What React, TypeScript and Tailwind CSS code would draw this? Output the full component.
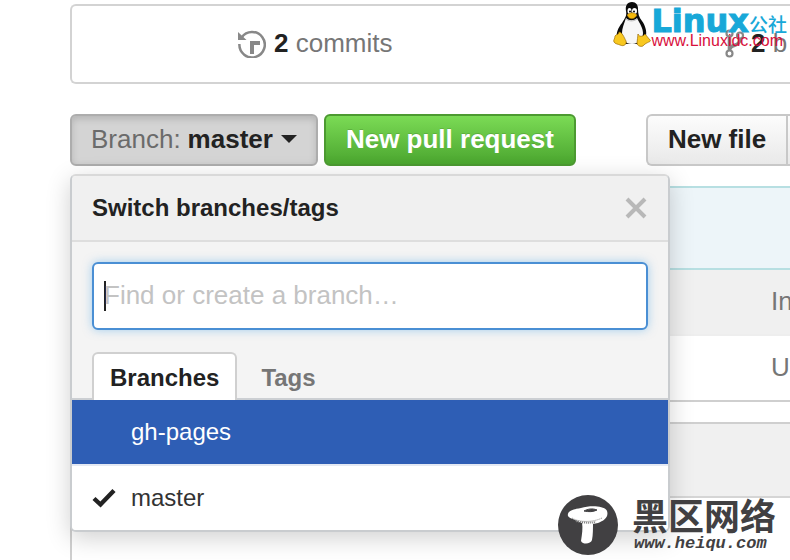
import React from "react";

function HistoryIcon() {
  return (
    <svg width="28" height="28" viewBox="0 0 28 28" aria-hidden="true" className="shrink-0">
      <path d="M3.600 7.500A12.700 12.700 0 1 1 1.400 14" fill="none" stroke="#888" strokeWidth="2.500" />
      <path d="M0 2l8.500 8H0z" fill="#888" />
      <path d="M12 24V11h10v4h-6v9z" fill="#888" />
    </svg>
  );
}

function BranchIcon() {
  return (
    <svg width="20" height="30" viewBox="0 0 20 30" aria-hidden="true" className="shrink-0">
      <g fill="none" stroke="#888" strokeWidth="2.200">
        <circle cx="4.500" cy="4.500" r="3" />
        <circle cx="15" cy="6.500" r="3" />
        <circle cx="4.500" cy="24.500" r="3" />
      </g>
      <path d="M4.500 7.500v14M15 9.500c0 5-3 6-6 7s-4.500 2-4.500 5" fill="none" stroke="#888" strokeWidth="3.600" />
    </svg>
  );
}

function Penguin() {
  return (
    <svg width="38" height="46" viewBox="0 0 38 46" aria-hidden="true" className="shrink-0">
      <path d="M19 1C14 1 12 5 13 10c1 5-1 7-4 12-4 5-6 10-5 14l7 7h16l6-8c1-5-1-11-4-15s-4-7-4-12C25 4 23 1 19 1z" fill="#0b0b0b" />
      <path d="M13 17c3 3 8 3 11 0 3 6 6 10 6 15s-4 11-11 11-10-5-10-11c0-5 2-9 4-15z" fill="#f7f7f7" />
      <path d="M13 18c2 2 7 3 11 0" fill="none" stroke="#bbb" />
      <ellipse cx="16.500" cy="10" rx="2" ry="3" fill="#fff" />
      <ellipse cx="21.500" cy="10" rx="2.500" ry="3" fill="#fff" />
      <circle cx="17" cy="10.500" r="1" />
      <circle cx="21" cy="10.500" r="1" />
      <path d="M14 14c3-3 7-3 10 0-2 4-7 6-10 0z" fill="#f5b90b" stroke="#9b6c05" strokeWidth=".5" />
      <path d="M6 31c3 0 5 5 7 9 1 3-2 6-6 4-2-1-5-1-6-3s1-3 1-6c1-2 4-1 4-4z" fill="#f8c820" stroke="#9b6c05" strokeWidth=".7" />
      <path d="M25 33c1 3 5 3 7 0l5 6c2 2-4 2-7 6-2 1-6 0-6-3s1-6 1-9z" fill="#f8c820" stroke="#9b6c05" strokeWidth=".7" />
    </svg>
  );
}

function Mushroom() {
  return (
    <svg width="60" height="60" viewBox="0 0 60 60" aria-hidden="true" className="shrink-0">
      <circle cx="30" cy="30" r="30" fill="#414042" />
      <path d="M10 19c0-3 6-5 13-6 10-3 24-2 26 3 2 6-3 10-9 12-7 2-17 1-23-3-5-2-8-3-7-6z" fill="#fff" />
      <path d="M24 27h11c0 6 0 13-1 18-1 4-9 5-11 1 1-7 2-12 1-19z" fill="#fff" />
      <path d="M26 16c4-2 8-3 13-1-4 2-8 2-13 1z" fill="#414042" stroke="#414042" />
      <path d="M14 23c8 5 22 4 30 0" fill="none" stroke="#888" strokeDasharray="1 1" />
      <path d="M18 26c7 2 13 2 20 1" fill="none" stroke="#777" strokeDasharray="1 1" strokeWidth="2" />
    </svg>
  );
}

function SummaryBar() {
  return (
    <section className="mt-1 flex h-20 items-center overflow-hidden rounded-l-md border-2 border-r-0 border-[#d3d3d3] pl-[166px] text-[#767676]">
      <a href="#commits" className="flex w-[487px] shrink-0 items-center gap-2">
        <HistoryIcon />
        <span className="pb-[2px]">
          <strong className="text-[#222]">2</strong> commits
        </span>
      </a>
      <a href="#branches" className="flex shrink-0 items-center gap-[6px]">
        <BranchIcon />
        <span className="pb-[2px]">
          <strong className="text-[#222]">2</strong> b
        </span>
      </a>
    </section>
  );
}

function BranchMenu() {
  return (
    <div className="absolute top-full left-0 z-10 mt-2 w-[600px] overflow-hidden rounded-md border-2 border-[#c9cccf] border-t-[#d9d9d9] bg-[#f4f4f4] bg-clip-padding text-2xl leading-6 shadow-[0_6px_24px_rgba(0,0,0,0.19)]">
      <header className="flex h-[66px] items-center justify-between border-b-2 border-[#dedede] bg-[#f0f0f0] px-5">
        <h2 className="font-bold text-[#222]">Switch branches/tags</h2>
        <button type="button" aria-label="Close">
          <svg width="24" height="24" viewBox="0 0 24 24" aria-hidden="true">
            <path d="M3 3l18 18M21 3L3 21" stroke="#b8b8b8" strokeWidth="4" />
          </svg>
        </button>
      </header>
      <div className="px-5 pt-5">
        <div className="flex h-[68px] items-center rounded-md border-2 border-[#4a8fd4] bg-white px-[10px] shadow-[0_0_10px_rgba(81,167,232,0.5)]">
          <span className="-mr-[2px] h-[30px] w-[2px] shrink-0 bg-[#222]" />
          <input
            type="text"
            aria-label="Find or create a branch"
            placeholder="Find or create a branch…"
            className="h-full min-w-0 flex-1 pb-[2px] text-[26px] outline-none placeholder:text-[#c3c3c3]"
          />
        </div>
      </div>
      <div className="mt-[22px] flex h-12 border-b-2 border-[#cccfd3] px-5" role="tablist">
        <button type="button" role="tab" aria-selected="true" className="-mb-[2px] h-12 rounded-t-md border-2 border-b-0 border-[#d0d0d0] bg-white px-4 pt-[2px] font-bold text-[#222]">
          Branches
        </button>
        <button type="button" role="tab" aria-selected="false" className="px-6 pt-[6px] font-bold text-[#767676]">
          Tags
        </button>
      </div>
      <ul>
        <li>
          <button type="button" className="flex h-16 w-full items-center bg-[#2e5eb5] pl-[59px] text-white">
            gh-pages
          </button>
        </li>
        <li>
          <button type="button" className="flex h-[66px] w-full items-center border-t-2 border-[#e4e9f3] bg-white pl-5 text-[#333]">
            <svg width="24" height="20" viewBox="0 0 24 20" aria-hidden="true" className="mr-[15px]">
              <path d="M2 10.500l6.500 6L22 2.500" fill="none" stroke="#222" strokeWidth="4.400" />
            </svg>
            master
          </button>
        </li>
      </ul>
    </div>
  );
}

function Toolbar() {
  return (
    <div className="mt-[30px] flex h-[52px]">
      <div className="relative shrink-0">
        <button
          type="button"
          aria-expanded="true"
          className="flex h-full items-center rounded-md border-2 border-[#adadad] bg-[#d4d4d4] px-[19px] pb-[2px] shadow-[inset_0_3px_7px_rgba(0,0,0,0.15)]"
        >
          <span className="text-[#6b6b6b]">Branch:</span>
          <strong className="ml-[7px] text-[#222]">master</strong>
          <svg width="16" height="8" viewBox="0 0 16 8" aria-hidden="true" className="ml-2">
            <path d="M0 0h16L8 8z" fill="#222" />
          </svg>
        </button>
        <BranchMenu />
      </div>
      <button
        type="button"
        className="ml-[6px] shrink-0 rounded-md border-2 border-[#4c9a31] bg-linear-to-b from-[#7bdb55] to-[#4ba62f] px-5 pb-[2px] font-bold text-white text-shadow-[0_-1px_0_rgba(0,0,0,0.15)]"
      >
        New pull request
      </button>
      <button
        type="button"
        className="ml-[70px] shrink-0 rounded-l-md border-2 border-r-0 border-[#c8c8c8] bg-linear-to-b from-[#fcfcfc] to-[#e9e9e9] px-5 pb-[2px] font-bold text-[#222]"
      >
        New file
      </button>
      <div className="flex-1 border-2 border-r-0 border-[#c8c8c8] bg-linear-to-b from-[#fcfcfc] to-[#e9e9e9]" />
    </div>
  );
}

function FileList() {
  return (
    <section className="mt-5">
      <div className="h-[84px] border-y-2 border-l-2 border-[#b7dfe2] bg-[#edf5f9]" />
      <table className="w-full table-fixed border-b-2 border-l-2 border-[#cfcfcf] text-[#767676]">
        <tbody>
          <tr className="h-[65px] bg-[#f0f0f0]">
            <td className="w-[700px]" />
            <td className="pb-[2px] whitespace-nowrap">In</td>
          </tr>
          <tr className="h-[66px] border-t-2 border-[#eeeeee]">
            <td />
            <td className="pb-[2px] whitespace-nowrap">U</td>
          </tr>
        </tbody>
      </table>
    </section>
  );
}

function Readme() {
  return (
    <section className="mt-5 flex flex-1 flex-col rounded-tl-md border-t-2 border-l-2 border-[#cfcfcf]">
      <div className="h-[74px] border-b-2 border-[#d5d5d5] bg-[#f0f0f0]" />
    </section>
  );
}

export default function App() {
  return (
    <main className="relative flex h-screen flex-col overflow-hidden bg-white pl-[70px] font-['Liberation_Sans',Arial,sans-serif] text-[26px] leading-none">
      <SummaryBar />
      <Toolbar />
      <FileList />
      <Readme />

      <div className="absolute top-[1px] right-[3px] z-20 flex">
        <Penguin />
        <div className="whitespace-nowrap">
          <div className="flex h-8 items-center text-[#18a8d8]">
            <span className="pt-[7px] font-['DejaVu_Sans',sans-serif] text-[32px] font-bold [-webkit-text-stroke:1px_#18a8d8]">Linux</span>
            <span className="pt-3 font-['Noto_Sans_CJK_SC',sans-serif] text-[19px] font-medium">公社</span>
          </div>
          <div className="text-base leading-4 text-[#d80f3c]">www.Linuxidc.com</div>
        </div>
      </div>

      <div className="absolute right-[14px] bottom-[5px] z-20 flex items-center gap-[14px] text-[#414042]">
        <Mushroom />
        <div className="whitespace-nowrap">
          <div className="pb-[2px] font-['Noto_Sans_CJK_SC',sans-serif] text-4xl leading-9 font-bold">黑区网络</div>
          <div className="pl-[2px] font-['Liberation_Mono',monospace] text-[17px] leading-5 font-bold italic">www.heiqu.com</div>
        </div>
      </div>
    </main>
  );
}
